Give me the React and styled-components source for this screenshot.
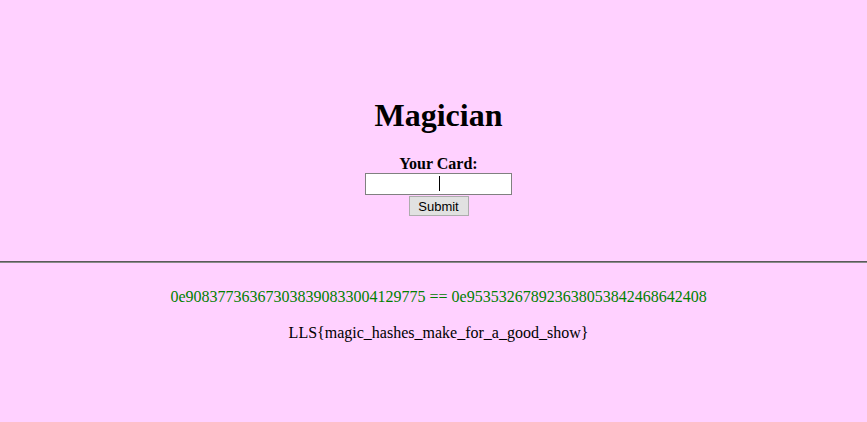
import React from "react";
import styled, { createGlobalStyle } from "styled-components";

const Global = createGlobalStyle`
  html, body { margin: 0; padding: 0; background: #ffd1ff; }
  body { font-family: "Liberation Serif", "Times New Roman", serif; font-size: 16px; color: #000; }
`;

const Top = styled.section`
  display: flex;
  flex-direction: column;
  align-items: center;
  padding: 97px 0 0 10px;
  height: 261px;
  box-sizing: border-box;
`;

const Title = styled.h1`
  margin: 0 0 21px;
  font-size: 32px;
  line-height: 37px;
  font-weight: bold;
`;

const Form = styled.form`
  display: flex;
  flex-direction: column;
  align-items: center;
`;

const Label = styled.label`
  font-weight: bold;
  font-size: 16px;
  line-height: 18px;
`;

const InputWrap = styled.div`
  position: relative;
  width: 147px;
  height: 22px;
  &::after {
    content: "";
    position: absolute;
    left: 74px;
    top: 3px;
    width: 1px;
    height: 15px;
    background: #000;
  }
`;

const Input = styled.input`
  box-sizing: border-box;
  width: 147px;
  height: 22px;
  border: 1px solid #808080;
  background: #fff;
  padding: 1px 2px;
  font-family: "Liberation Sans", Arial, sans-serif;
  font-size: 13px;
  text-align: center;
  outline: none;
`;

const Button = styled.button`
  box-sizing: border-box;
  margin-top: 1px;
  width: 60px;
  height: 20px;
  padding: 0;
  background: #e1e1e1;
  border: 1px solid #adadad;
  border-radius: 0;
  font-family: "Liberation Sans", Arial, sans-serif;
  font-size: 13px;
  color: #000;
`;

const Rule = styled.hr`
  margin: 0;
  height: 0;
  border: none;
  border-top: 1px solid #5a5a5a;
  border-bottom: 1px solid #8a8a8a;
`;

const Bottom = styled.section`
  display: flex;
  flex-direction: column;
  align-items: center;
  padding: 25px 0 0 10px;
`;

const Hash = styled.p`
  margin: 0 0 18px;
  color: #008000;
  line-height: 18px;
`;

const Flag = styled.p`
  margin: 0;
  line-height: 18px;
`;

export default function App() {
  return (
    <>
      <Global />
      <Top>
        <Title>Magician</Title>
        <Form onSubmit={(e) => e.preventDefault()}>
          <Label htmlFor="card">Your Card:</Label>
          <InputWrap>
            <Input id="card" type="text" />
          </InputWrap>
          <Button type="submit">Submit</Button>
        </Form>
      </Top>
      <Rule />
      <Bottom>
        <Hash>0e908377363673038390833004129775 == 0e953532678923638053842468642408</Hash>
        <Flag>LLS{"{"}magic_hashes_make_for_a_good_show{"}"}</Flag>
      </Bottom>
    </>
  );
}
